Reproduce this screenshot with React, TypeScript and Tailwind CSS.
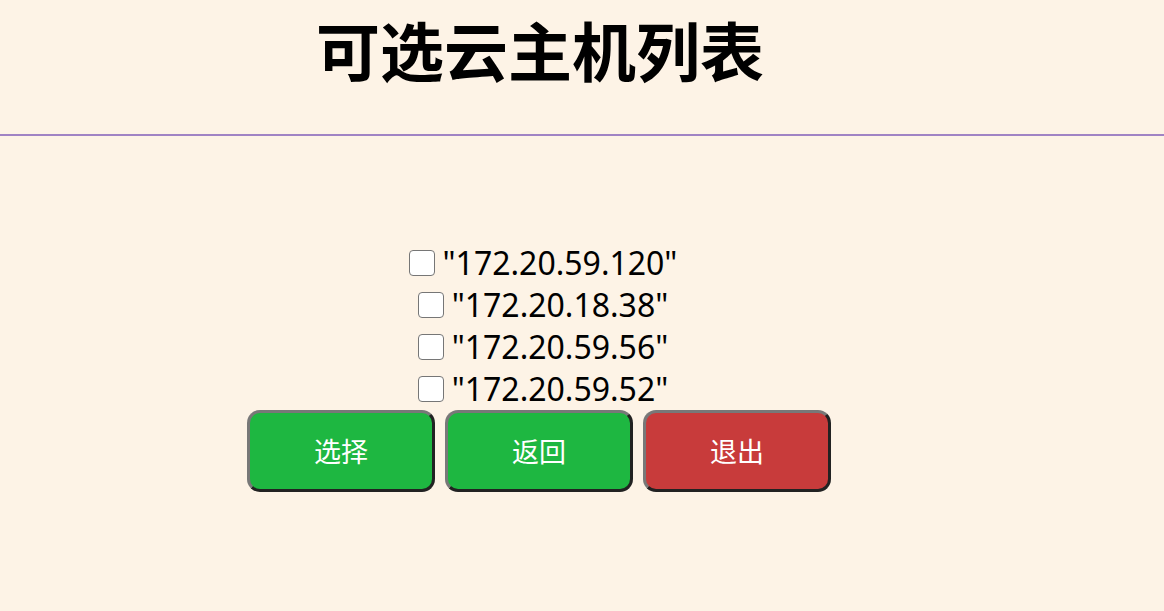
const hosts = ['"172.20.59.120"', '"172.20.18.38"', '"172.20.59.56"', '"172.20.59.52"'];

const btn =
  "w-[188px] h-[82px] pt-[3px] rounded-[13px] border-[3px] border-t-[#787878] border-l-[#787878] border-r-[#222222] border-b-[#222222] text-white text-[27px]";

export default function App() {
  return (
    <div className="min-h-[611px] bg-[#fdf3e6] text-black [font-family:'Noto_Sans','Noto_Sans_CJK_SC',sans-serif]">
      <div className="w-[1080px] h-[134px] pt-[20px] text-center">
        <h1 className="text-[64px] leading-[64px] font-bold">可选云主机列表</h1>
      </div>
      <div className="h-[2px] bg-[#a083c4]" />

      <div className="w-[1086px] pt-[106px] flex flex-col items-center">
        {hosts.map((h) => (
          <label key={h} className="flex items-center h-[42px] text-[32px] leading-[42px]">
            <input
              type="checkbox"
              className="appearance-none w-[26px] h-[26px] mr-[8px] bg-white border border-[#767676] rounded-[4px]"
            />
            <span>{h}</span>
          </label>
        ))}
        <div className="flex gap-[10px] mr-[8px]">
          <button className={btn + " bg-[#1eb741]"}>选择</button>
          <button className={btn + " bg-[#1eb741]"}>返回</button>
          <button className={btn + " bg-[#c83b3b]"}>退出</button>
        </div>
      </div>
    </div>
  );
}
